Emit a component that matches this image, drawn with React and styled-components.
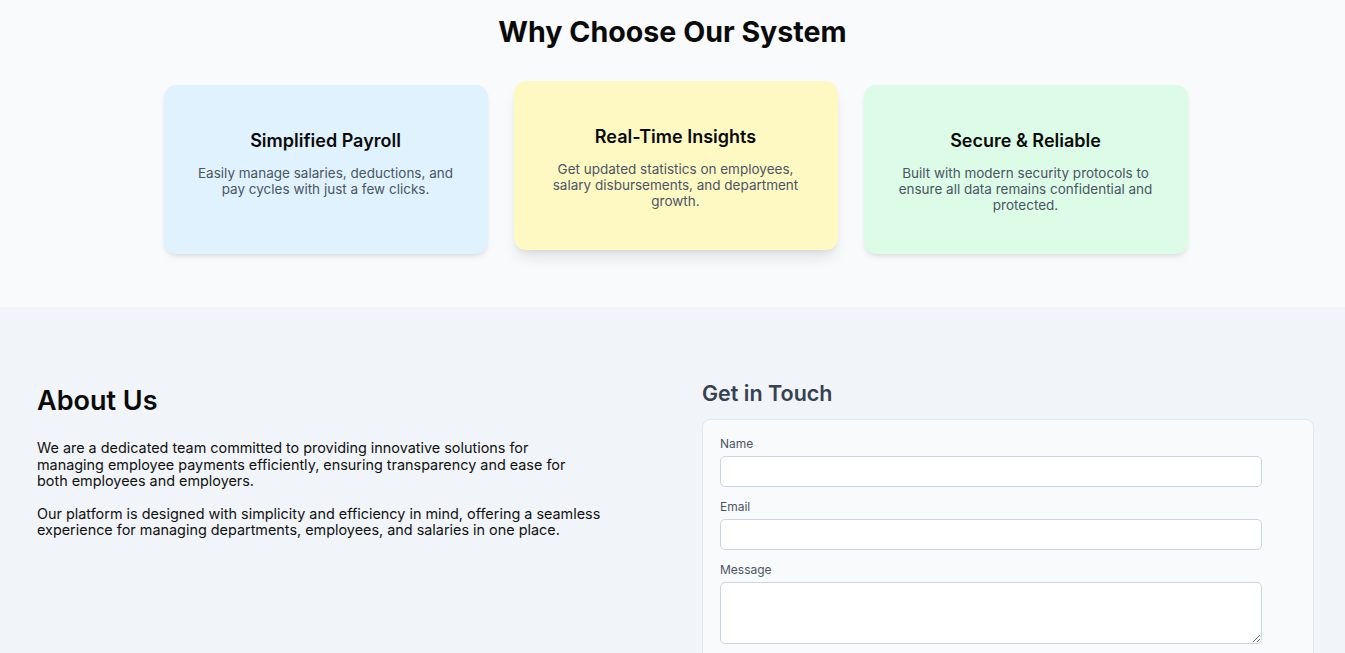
import React from 'react';
import styled, { createGlobalStyle } from 'styled-components';

const GlobalStyle = createGlobalStyle`
  * { box-sizing: border-box; }
  body {
    margin: 0;
    font-family: Inter, "Noto Sans", "Liberation Sans", sans-serif;
    color: #111827;
    background: #f1f5f9;
  }
`;

const FeaturesSection = styled.section`
  background: #f8fafc;
  padding: 14px 0 53px;
`;

const SectionTitle = styled.h2`
  margin: 0 0 35px;
  text-align: center;
  font-size: 28.6px;
  line-height: 36px;
  font-weight: 700;
  color: #0a0a0a;
`;

const CardGrid = styled.div`
  display: grid;
  grid-template-columns: repeat(3, 324px);
  gap: 26px;
  justify-content: center;
  padding-left: 6px;
`;

const FeatureCard = styled.div`
  background: ${(p) => p.$bg};
  border-radius: 12px;
  padding: 42px 32px 41px;
  text-align: center;
  box-shadow: ${(p) =>
    p.$lift
      ? '0 10px 15px -3px rgba(0,0,0,0.1), 0 4px 6px -4px rgba(0,0,0,0.1)'
      : '0 4px 6px -1px rgba(0,0,0,0.08), 0 2px 4px -2px rgba(0,0,0,0.08)'};
  transform: ${(p) => (p.$lift ? 'translateY(-4px)' : 'none')};
`;

const CardTitle = styled.h3`
  margin: 0 0 10px;
  font-size: 18px;
  line-height: 28px;
  font-weight: 600;
  color: #0a0a0a;
`;

const CardText = styled.p`
  margin: 0;
  font-size: 13.5px;
  line-height: 16px;
  color: #4b5563;
`;

const InfoSection = styled.section`
  display: grid;
  grid-template-columns: 1fr 612px;
  gap: 60px;
  padding: 73px 31px 40px 37px;
`;

const AboutColumn = styled.div`
  padding-top: 3px;
`;

const AboutTitle = styled.h2`
  margin: 0 0 21px;
  font-size: 27px;
  line-height: 36px;
  font-weight: 600;
  color: #0a0a0a;
`;

const AboutText = styled.p`
  margin: 0 0 16px;
  max-width: ${(p) => p.$width}px;
  font-size: 14.4px;
  line-height: 16.5px;
  color: #111111;
`;

const ContactTitle = styled.h2`
  margin: -1px 0 12px;
  font-size: 21.5px;
  line-height: 28px;
  font-weight: 600;
  color: #374151;
`;

const ContactCard = styled.form`
  background: #f8fafc;
  border: 1px solid #e2e8f0;
  border-radius: 8px;
  padding: 16px 17px 24px;
  display: flex;
  flex-direction: column;
  gap: 12px;
`;

const Field = styled.div`
  display: flex;
  flex-direction: column;
  gap: 4px;
`;

const Label = styled.label`
  font-size: 12px;
  line-height: 16px;
  color: #4b5563;
`;

const Input = styled.input`
  width: 100%;
  max-width: 542px;
  height: 31px;
  border: 1px solid #cbd5e1;
  border-radius: 5px;
  background: #ffffff;
  font-family: inherit;
  font-size: 14px;
  padding: 0 10px;
`;

const TextArea = styled.textarea`
  width: 100%;
  max-width: 542px;
  height: 62px;
  border: 1px solid #cbd5e1;
  border-radius: 5px;
  background: #ffffff;
  font-family: inherit;
  font-size: 14px;
  padding: 6px 10px;
`;

const features = [
  {
    title: 'Simplified Payroll',
    text: 'Easily manage salaries, deductions, and pay cycles with just a few clicks.',
    bg: '#e0f2fe',
  },
  {
    title: 'Real-Time Insights',
    text: 'Get updated statistics on employees, salary disbursements, and department growth.',
    bg: '#fef9c3',
    lift: true,
  },
  {
    title: 'Secure & Reliable',
    text: 'Built with modern security protocols to ensure all data remains confidential and protected.',
    bg: '#dcfce7',
  },
];

const App = () => {
  return (
    <>
      <GlobalStyle />
      <FeaturesSection>
        <SectionTitle>Why Choose Our System</SectionTitle>
        <CardGrid>
          {features.map((f) => (
            <FeatureCard key={f.title} $bg={f.bg} $lift={f.lift}>
              <CardTitle>{f.title}</CardTitle>
              <CardText>{f.text}</CardText>
            </FeatureCard>
          ))}
        </CardGrid>
      </FeaturesSection>

      <InfoSection>
        <AboutColumn>
          <AboutTitle>About Us</AboutTitle>
          <AboutText $width={540}>
            We are a dedicated team committed to providing innovative solutions for managing
            employee payments efficiently, ensuring transparency and ease for both employees and
            employers.
          </AboutText>
          <AboutText $width={572}>
            Our platform is designed with simplicity and efficiency in mind, offering a seamless
            experience for managing departments, employees, and salaries in one place.
          </AboutText>
        </AboutColumn>

        <div>
          <ContactTitle>Get in Touch</ContactTitle>
          <ContactCard onSubmit={(e) => e.preventDefault()}>
            <Field>
              <Label htmlFor="name">Name</Label>
              <Input id="name" type="text" />
            </Field>
            <Field>
              <Label htmlFor="email">Email</Label>
              <Input id="email" type="email" />
            </Field>
            <Field>
              <Label htmlFor="message">Message</Label>
              <TextArea id="message" />
            </Field>
          </ContactCard>
        </div>
      </InfoSection>
    </>
  );
};

export default App;
